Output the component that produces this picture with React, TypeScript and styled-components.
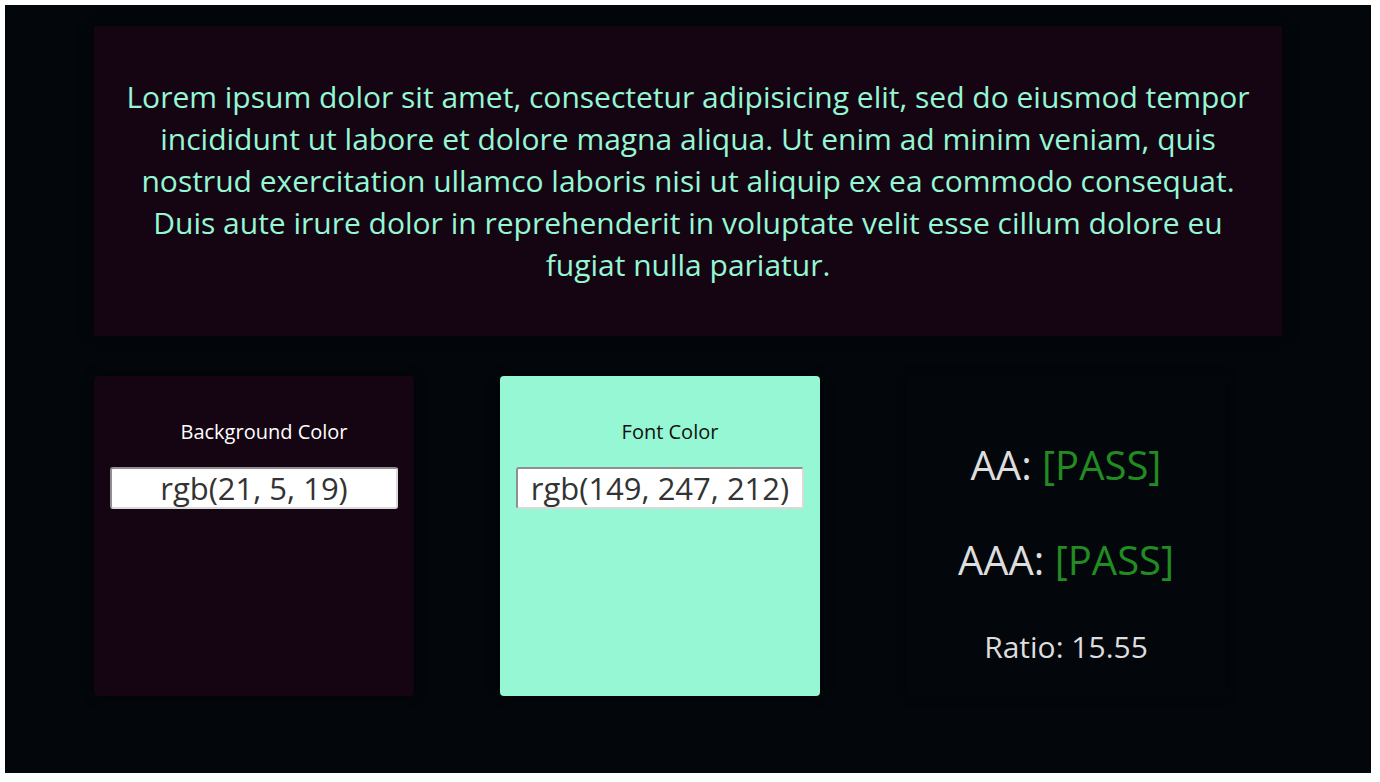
import React from "react";
import styled, { createGlobalStyle } from "styled-components";

const Global = createGlobalStyle`
  html, body { margin: 0; padding: 0; background: #ffffff; }
  body { font-family: "Open Sans", "Noto Sans", sans-serif; }
  * { box-sizing: border-box; }
`;

const Screen = styled.div`
  margin: 5px;
  width: 1366px;
  height: 768px;
  background: #03070b;
  padding-top: 21px;
`;

const Banner = styled.div<{ $bg: string; $fg: string }>`
  width: 1188px;
  height: 310px;
  margin: 0 auto;
  background: ${(p) => p.$bg};
  color: ${(p) => p.$fg};
  display: flex;
  align-items: center;
  justify-content: center;
  padding: 0 30px;
  box-shadow: 0 0 12px rgba(0, 0, 0, 0.5);
`;

const BannerText = styled.p`
  margin: 0;
  font-size: 30px;
  line-height: 42px;
  text-align: center;
`;

const CardRow = styled.div`
  width: 1188px;
  margin: 40px auto 0;
  display: flex;
  gap: 86px;
`;

const Card = styled.div<{ $bg: string; $fg: string }>`
  width: 320px;
  height: 320px;
  border-radius: 4px;
  background: ${(p) => p.$bg};
  color: ${(p) => p.$fg};
  box-shadow: 0 0 12px rgba(0, 0, 0, 0.6);
  display: flex;
  flex-direction: column;
  align-items: center;
  padding-top: 44px;
`;

const Label = styled.label`
  font-size: 20px;
  line-height: 24px;
  margin-left: 20px;
`;

const ColorInput = styled.input`
  margin-top: 23px;
  width: 90%;
  height: 42px;
  border: 2px solid #8f8f8f;
  border-right-color: #d9d9d9;
  border-bottom-color: #d9d9d9;
  border-radius: 3px;
  background: #ffffff;
  color: #333333;
  font-family: "Open Sans", "Noto Sans", sans-serif;
  font-size: 31px;
  text-align: center;
  padding: 0;
  outline: none;
`;

const ResultCard = styled.div`
  width: 320px;
  height: 320px;
  border-radius: 4px;
  background: #03070b;
  box-shadow: 0 0 10px rgba(0, 0, 0, 0.5);
  color: #dddddd;
  display: flex;
  flex-direction: column;
  align-items: center;
  padding-top: 62px;
`;

const Level = styled.div<{ $gap: number }>`
  font-size: 40px;
  line-height: 54px;
  margin-top: ${(p) => p.$gap}px;
`;

const Pass = styled.span`
  color: #228b22;
`;

const Ratio = styled.div`
  margin-top: 41px;
  font-size: 30px;
  line-height: 38px;
`;

export default function App() {
  const bg = "rgb(21, 5, 19)";
  const fg = "rgb(149, 247, 212)";
  return (
    <>
      <Global />
      <Screen>
        <Banner $bg={bg} $fg={fg}>
          <BannerText>
            Lorem ipsum dolor sit amet, consectetur adipisicing elit, sed do eiusmod tempor
            incididunt ut labore et dolore magna aliqua. Ut enim ad minim veniam, quis
            nostrud exercitation ullamco laboris nisi ut aliquip ex ea commodo consequat.
            Duis aute irure dolor in reprehenderit in voluptate velit esse cillum dolore eu
            fugiat nulla pariatur.
          </BannerText>
        </Banner>
        <CardRow>
          <Card $bg={bg} $fg="#ffffff">
            <Label>Background Color</Label>
            <ColorInput defaultValue={bg} />
          </Card>
          <Card $bg={fg} $fg="#111111">
            <Label>Font Color</Label>
            <ColorInput defaultValue={fg} />
          </Card>
          <ResultCard>
            <Level $gap={0}>
              AA: <Pass>[PASS]</Pass>
            </Level>
            <Level $gap={41}>
              AAA: <Pass>[PASS]</Pass>
            </Level>
            <Ratio>Ratio: 15.55</Ratio>
          </ResultCard>
        </CardRow>
      </Screen>
    </>
  );
}
